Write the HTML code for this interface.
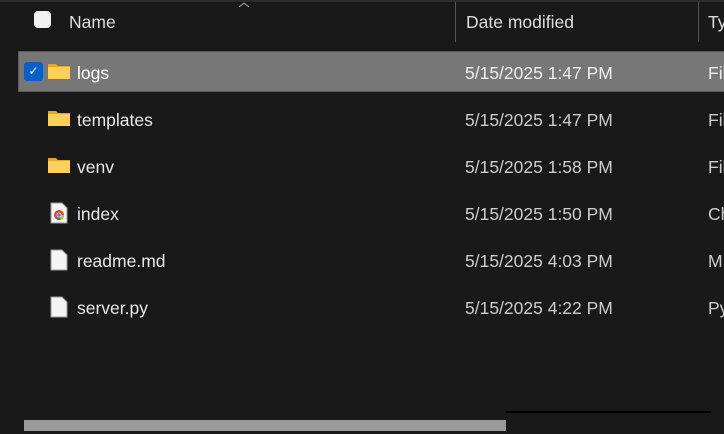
<!DOCTYPE html>
<html><head><style>
body{margin:0;width:724px;height:434px;background:#191919;overflow:hidden;position:relative;font-family:"Liberation Sans",sans-serif;color:#e8e8e8}
.a{position:absolute}
.t{font-size:17.5px;white-space:nowrap}
</style></head><body>
<div class="a" style="left:0;top:0;width:724px;height:2px;background:#2c2c2c"></div>
<svg class="a" style="left:238px;top:1px" width="12" height="8"><path d="M1 6l5-4 5 4" fill="none" stroke="#aaa" stroke-width="1"/></svg>
<div class="a" style="left:34px;top:11px;width:17px;height:17px;background:#f2f2f2;border-radius:4px"></div>
<div class="a t" style="left:69px;top:12px;color:#ddd">Name</div>
<div class="a" style="left:455px;top:2px;width:1px;height:40px;background:#555"></div>
<div class="a t" style="left:466px;top:12px;color:#ddd">Date modified</div>
<div class="a" style="left:698px;top:2px;width:1px;height:40px;background:#555"></div>
<div class="a t" style="left:708px;top:12px;color:#ddd">Ty</div>

<div class="a" style="left:18px;top:51px;width:710px;height:39px;background:#777;border:1px solid #5a5a5a"></div>
<div class="a" style="left:24px;top:62px;width:19px;height:19px;background:#0a5fc4;border-radius:3px;color:#fff;font-size:12px;text-align:center;line-height:19px">✓</div>

<svg class="a" style="left:47px;top:62px" width="24" height="18"><path d="M1 2h8l2 2h12v13H1z" fill="#e8a520"/><rect x="1" y="5" width="22" height="12" fill="#fbd15c"/></svg>
<svg class="a" style="left:47px;top:109px" width="24" height="18"><path d="M1 2h8l2 2h12v13H1z" fill="#e8a520"/><rect x="1" y="5" width="22" height="12" fill="#fbd15c"/></svg>
<svg class="a" style="left:47px;top:156px" width="24" height="18"><path d="M1 2h8l2 2h12v13H1z" fill="#e8a520"/><rect x="1" y="5" width="22" height="12" fill="#fbd15c"/></svg>
<svg class="a" style="left:50px;top:202px" width="18" height="22"><path d="M1 1h11l5 5v15H1z" fill="#f4f4f4" stroke="#999"/><circle cx="9" cy="13" r="5" fill="#db4437"/><path d="M9 13L14 13A5 5 0 0 1 6 17z" fill="#0f9d58"/><path d="M9 13l5 0a5 5 0 0 1-3 4.6z" fill="#f4b400"/><circle cx="9" cy="13" r="2.4" fill="#fff"/><circle cx="9" cy="13" r="1.8" fill="#4285f4"/></svg>
<svg class="a" style="left:50px;top:249px" width="18" height="22"><path d="M1 1h11l5 5v15H1z" fill="#f4f4f4" stroke="#999"/></svg>
<svg class="a" style="left:50px;top:296px" width="18" height="22"><path d="M1 1h11l5 5v15H1z" fill="#f4f4f4" stroke="#999"/></svg>

<div class="a t" style="left:77px;top:63px;color:#fff">logs</div>
<div class="a t" style="left:77px;top:110px">templates</div>
<div class="a t" style="left:77px;top:157px">venv</div>
<div class="a t" style="left:77px;top:204px">index</div>
<div class="a t" style="left:77px;top:251px">readme.md</div>
<div class="a t" style="left:77px;top:298px">server.py</div>

<div class="a t" style="left:465px;top:63px;color:#eee">5/15/2025 1:47 PM</div>
<div class="a t" style="left:465px;top:110px;color:#ccc">5/15/2025 1:47 PM</div>
<div class="a t" style="left:465px;top:157px;color:#ccc">5/15/2025 1:58 PM</div>
<div class="a t" style="left:465px;top:204px;color:#ccc">5/15/2025 1:50 PM</div>
<div class="a t" style="left:465px;top:251px;color:#ccc">5/15/2025 4:03 PM</div>
<div class="a t" style="left:465px;top:298px;color:#ccc">5/15/2025 4:22 PM</div>

<div class="a t" style="left:708px;top:63px;color:#eee">Fil</div>
<div class="a t" style="left:708px;top:110px;color:#ccc">Fil</div>
<div class="a t" style="left:708px;top:157px;color:#ccc">Fil</div>
<div class="a t" style="left:708px;top:204px;color:#ccc">Ch</div>
<div class="a t" style="left:708px;top:251px;color:#ccc">M</div>
<div class="a t" style="left:708px;top:298px;color:#ccc">Py</div>

<div class="a" style="left:506px;top:411px;width:205px;height:2px;background:#000"></div>
<div class="a" style="left:24px;top:420px;width:482px;height:11px;background:#9a9a9a"></div>
</body></html>
